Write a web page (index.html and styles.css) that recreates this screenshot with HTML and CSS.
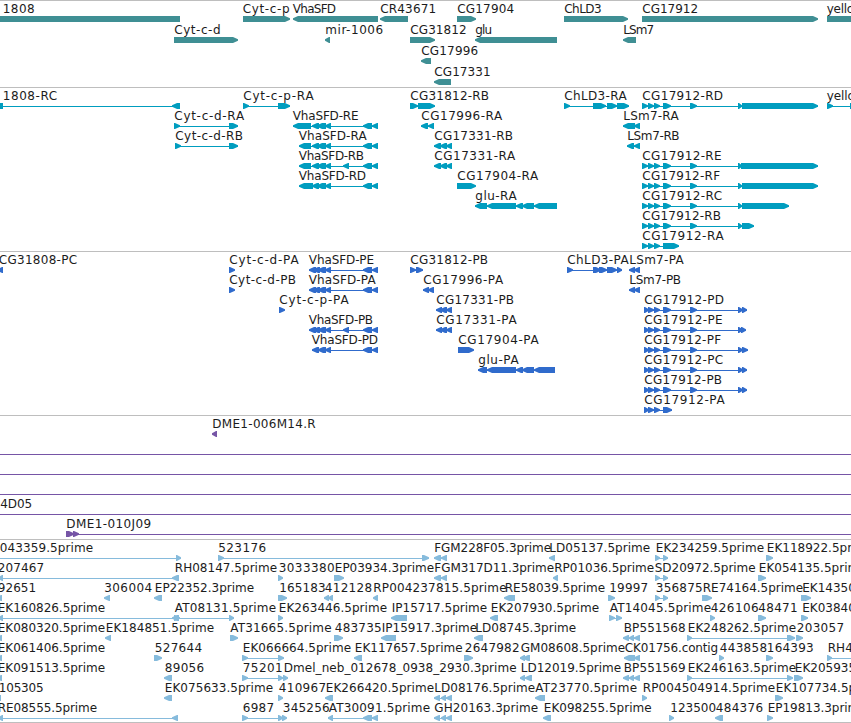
FILE: index.html
```html
<!DOCTYPE html>
<html>
<head>
  <meta charset="utf-8">
  <title>Genome Browser</title>
  <link rel="stylesheet" href="styles.css">
</head>
<body>

  <div class="browser">
    <section class="track genes" id="genes"></section>
    <section class="track transcripts" id="transcripts"></section>
    <section class="track proteins" id="proteins"></section>
    <section class="track clones" id="clones"></section>
    <section class="track ests" id="ests"></section>
  </div>

  <script src="script.js"></script>
</body>
</html>
```

FILE: styles.css
```css
body {
  margin: 0;
  background: #fff;
  overflow: hidden;
}

.browser {
  display: flex;
  flex-direction: column;
  width: 100%;
  height: 723px;
  overflow: hidden;
}

.track {
  flex: none;
  border-top: 1px solid #bebebe;
}

.track svg {
  display: block;
  width: 100%;
  height: 100%;
  overflow: hidden;
}

.track text {
  font-family: "DejaVu Sans", sans-serif;
  font-size: 12px;
  fill: #1c1c1c;
}

.genes {
  height: 86px;
  fill: #3f8f94;
}

.transcripts {
  height: 163px;
  fill: #009dbf;
}

.proteins {
  height: 163px;
  fill: #306bcc;
}

.clones {
  height: 123px;
  fill: #7655a6;
}

.ests {
  height: 182px;
  fill: #86bbdc;
  border-bottom: 1px solid #bebebe;
}
```

FILE: script.js
```javascript
// [row, label, label start, label end, strand, blocks]
const genes = [
  [0, '1808', 3, 34, '<', [[-10, 180]]],
  [0, 'Cyt-c-p', 243, 289, '>', [[243, 290]]],
  [0, 'VhaSFD', 293, 335.5, '<', [[293, 378]]],
  [0, 'CR43671', 380.5, 435.5, '<', [[380, 408]]],
  [0, 'CG17904', 457.5, 513.5, '>', [[457, 476]]],
  [0, 'ChLD3', 564.5, 601, '>', [[564, 628]]],
  [0, 'CG17912', 642.5, 697.5, '>', [[642, 818]]],
  [0, 'yellow', 827, 863, '>', [[827, 900]]],
  [1, 'Cyt-c-d', 174.5, 220, '>', [[174, 238]]],
  [1, 'mir-1006', 325.5, 382.5, '<', [[325, 330]]],
  [1, 'CG31812', 410.5, 466, '>', [[410, 435]]],
  [1, 'glu', 475.5, 491.5, '<', [[475, 557]]],
  [1, 'LSm7', 623.5, 653.5, '<', [[623, 636]]],
  [2, 'CG17996', 421.5, 477.5, '<', [[421, 431]]],
  [3, 'CG17331', 434.5, 490, '<', [[434, 451]]]
];

const sfd = [[312, 319], [317, 326], [325, 331], [363, 372], [372, 378]];
const sfdB = [[312, 319], [317, 326], [325, 331], [343, 349], [363, 372], [372, 378]];
const c17331 = [[434, 441], [440, 447], [446, 452]];
const first3 = [[642, 648], [648, 654], [654, 660]];
const c17912 = [...first3, [663, 671], [690, 697], [738, 742]];

const transcripts = [
  [0, '1808-RC', 3, 56.5, '<', [[-9, 3], [172, 180]]],
  [0, 'Cyt-c-p-RA', 243.5, 313, '>', [[243, 249], [278, 290]]],
  [0, 'CG31812-RB', 410.5, 488.5, '>', [[410, 418], [418, 435]]],
  [0, 'ChLD3-RA', 564.5, 626, '>', [[564, 570], [593, 606], [607, 617], [617, 629]]],
  [0, 'CG17912-RD', 642.5, 722.5, '>', [...c17912, [742, 818]]],
  [0, 'yellow-RA', 827, 884, '>', [[827, 833], [850, 870]]],
  [1, 'Cyt-c-d-RA', 174.5, 243.5, '>', [[174, 180], [229, 238]]],
  [1, 'VhaSFD-RE', 293, 358, '<', [[293, 311], ...sfd]],
  [1, 'CG17996-RA', 421.5, 501.5, '<', [[421, 428], [428, 434]]],
  [1, 'LSm7-RA', 623.5, 678, '<', [[623, 635], [634, 640]]],
  [2, 'Cyt-c-d-RB', 175.5, 242.5, '>', [[175, 181], [229, 238]]],
  [2, 'VhaSFD-RA', 299, 366, '<', [[299, 311], ...sfd]],
  [2, 'CG17331-RB', 434.5, 512.5, '<', c17331],
  [2, 'LSm7-RB', 627.5, 679, '<', [[627, 634], [634, 640]]],
  [3, 'VhaSFD-RB', 299, 363.5, '<', [[299, 311], ...sfdB]],
  [3, 'CG17331-RA', 434.5, 514.5, '<', c17331],
  [3, 'CG17912-RE', 642.5, 721, '>', [...c17912, [741, 818]]],
  [4, 'VhaSFD-RD', 299, 365.5, '<', [[299, 313], ...sfd]],
  [4, 'CG17904-RA', 457.5, 537.5, '>', [[457, 476]]],
  [4, 'CG17912-RF', 642.5, 719.5, '>', [...c17912, [742, 818]]],
  [5, 'glu-RA', 475.5, 516, '<', [[475, 487], [487, 516], [516, 523], [522, 534], [534, 557]]],
  [5, 'CG17912-RC', 642.5, 721.5, '>', [...c17912, [742, 789]]],
  [6, 'CG17912-RB', 642.5, 720.5, '>', [...c17912, [742, 754]]],
  [7, 'CG17912-RA', 642.5, 723, '>', [...first3, [663, 679]]]
];

const psfd = [[313, 320], [318, 326], [325, 331], [363, 372], [372, 378]];
const psfdB = [[313, 320], [318, 326], [325, 331], [343, 349], [363, 372], [372, 378]];
const p17331 = [[436, 442], [440, 447], [446, 452]];
const pfirst3 = [[644, 649], [648, 654], [654, 660]];
const p17912 = [...pfirst3, [663, 671], [690, 697], [738, 743]];

const proteins = [
  [0, 'CG31808-PC', -1, 76.5, '<', [[-3, 3]]],
  [0, 'Cyt-c-d-PA', 229.5, 298, '>', [[229, 235]]],
  [0, 'VhaSFD-PE', 309, 373.5, '<', [[309, 316], ...psfd]],
  [0, 'CG31812-PB', 410.5, 487.5, '>', [[410, 416], [416, 423]]],
  [0, 'ChLD3-PA', 567.5, 628, '>', [[567, 573], [593, 601], [599, 607], [607, 617], [617, 622]]],
  [0, 'LSm7-PA', 629.5, 683, '<', [[629, 635], [634, 640]]],
  [1, 'Cyt-c-d-PB', 229.5, 295.5, '>', [[229, 235]]],
  [1, 'VhaSFD-PA', 309, 375, '<', [[309, 316], ...psfd]],
  [1, 'CG17996-PA', 423.5, 502.5, '<', [[423, 429], [428, 434]]],
  [1, 'LSm7-PB', 629.5, 680.5, '<', [[629, 635], [634, 640]]],
  [2, 'Cyt-c-p-PA', 279.5, 348, '>', [[279, 285]]],
  [2, 'CG17331-PB', 436.5, 513.5, '<', p17331],
  [2, 'CG17912-PD', 644.5, 723.5, '>', [...p17912, [742, 747]]],
  [3, 'VhaSFD-PB', 309, 372.5, '<', [[309, 316], ...psfdB]],
  [3, 'CG17331-PA', 436.5, 516, '<', p17331],
  [3, 'CG17912-PE', 644.5, 722, '>', [...p17912, [741, 746]]],
  [4, 'VhaSFD-PD', 312, 377.5, '<', [[312, 319], [318, 326], [325, 331], [363, 372], [372, 378]]],
  [4, 'CG17904-PA', 458.5, 538, '>', [[458, 474]]],
  [4, 'CG17912-PF', 644.5, 720.5, '>', [...p17912, [742, 748]]],
  [5, 'glu-PA', 478.5, 518, '<', [[478, 487], [487, 516], [516, 523], [522, 534], [534, 555]]],
  [5, 'CG17912-PC', 644.5, 722.5, '>', [...p17912, [742, 747]]],
  [6, 'CG17912-PB', 644.5, 721.5, '>', [...p17912, [742, 747]]],
  [7, 'CG17912-PA', 644.5, 724, '>', [...pfirst3, [663, 672]]]
];

const clones = [
  [0, 'DME1-006M14.R', 212.5, 315, '<', [[212, 217]]],
  [1, '', 0, 0, '>', [[-10, -5], [860, 865]]],
  [2, '', 0, 0, '>', [[-10, -5], [860, 865]]],
  [3, '', 0, 0, '>', [[-10, -5], [860, 865]]],
  [4, '4D05', 0.5, 31.5, '>', [[-10, -5], [860, 865]]],
  [5, 'DME1-010J09', 66.5, 150.5, '>', [[66, 74], [73, 79], [860, 865]]]
];

const pair = [[655, 660], [663, 668]];

const ests = [
  [0, '043359.5prime', 0, 92.5, '>', [[-10, -5], [176, 181]]],
  [0, '523176', 218.5, 265.5, '>', [[218, 224], [422, 429]]],
  [0, 'FGM228F05.3prime', 434.5, 550.5, '<', [[434, 441], [441, 447]]],
  [0, 'LD05137.5prime', 549.5, 649.5, '<', [[549, 555]]],
  [0, 'EK234259.5prime', 656, 763.5, '>', pair],
  [0, 'EK118922.5prime', 767, 874, '>', [[766, 773]]],
  [1, '207467', -2, 43.5, '<', [[-2, 3], [172, 179]]],
  [1, 'RH08147.5prime', 175, 276.5, '<', []],
  [1, '3033380', 279, 334, '>', [[278, 283]]],
  [1, 'EP03934.3prime', 335, 433.5, '>', [[334, 344]]],
  [1, 'FGM317D11.3prime', 434.5, 553.5, '<', [[434, 441], [441, 447]]],
  [1, 'RP01036.5prime', 554.5, 653.5, '<', [[553, 558]]],
  [1, 'SD20972.5prime', 655, 755, '>', pair],
  [1, 'EK054135.5prime', 759, 866, '>', [[758, 766]]],
  [2, '92651', -2, 35.5, '<', [[-4, 2]]],
  [2, '306004', 104.5, 151.5, '<', [[104, 110]]],
  [2, 'EP22352.3prime', 155, 253.5, '<', [[154, 162]]],
  [2, '165183', 279.5, 325, '>', [[278, 287]]],
  [2, '412128', 325, 371.5, '<', [[324, 329], [328, 333]]],
  [2, 'RP004237815.5prime', 373.5, 506, '<', [[373, 378]]],
  [2, 'RE58039.5prime', 505, 604.5, '<', [[504, 515]]],
  [2, '19997', 609.5, 647.5, '>', [[608, 615]]],
  [2, '356875', 656, 702, '>', pair],
  [2, 'RE74164.5prime', 703, 802.5, '>', [[702, 712]]],
  [2, 'EK143507.5prime', 802.5, 909, '>', [[801, 811]]],
  [3, 'EK160826.5prime', -2, 104.5, '<', [[-2, 3], [172, 179]]],
  [3, 'AT08131.5prime', 175, 275.5, '>', [[174, 180], [229, 234]]],
  [3, 'EK263446.5prime', 279, 386.5, '>', [[278, 283]]],
  [3, 'IP15717.5prime', 392, 486.5, '<', [[391, 407]]],
  [3, 'EK207930.5prime', 491, 598.5, '<', [[490, 498]]],
  [3, 'AT14045.5prime', 610, 710.5, '>', [[609, 615], [616, 622]]],
  [3, '426106', 711, 758, '>', [[710, 715]]],
  [3, '48471', 758.5, 797, '>', [[758, 766]]],
  [3, 'EK038407.5prime', 802.5, 909, '>', [[801, 808]]],
  [4, 'EK080320.5prime', -2, 104.5, '<', [[-4, 2]]],
  [4, 'EK184851.5prime', 106, 213.5, '<', [[105, 111]]],
  [4, 'AT31665.5prime', 230.5, 331, '>', [[230, 238]]],
  [4, '483735', 335, 381, '>', [[334, 343]]],
  [4, 'IP15917.3prime', 382, 476.5, '<', [[381, 396]]],
  [4, 'LD08745.3prime', 475.5, 575.5, '<', [[474, 483]]],
  [4, 'BP551568', 624, 685, '<', [[623, 629], [629, 634], [634, 640]]],
  [4, 'EK248262.5prime', 688, 795.5, '>', [[687, 692], [787, 795]]],
  [4, '203057', 797, 843.5, '>', [[796, 803]]],
  [5, 'EK061406.5prime', -2, 104.5, '<', [[-4, 2]]],
  [5, '527644', 155, 201.5, '>', [[154, 162]]],
  [5, 'EK066664.5prime', 243, 350.5, '>', [[242, 248], [278, 284]]],
  [5, 'EK117657.5prime', 355, 462, '<', [[354, 362]]],
  [5, '2647982', 465, 519, '>', [[464, 473]]],
  [5, 'GM08608.5prime', 521, 624.5, '<', [[520, 525], [523, 530]]],
  [5, 'CK01756.contig', 625, 717.5, '<', [[624, 635], [634, 640]]],
  [5, '443858', 720, 766.5, '>', [[719, 724]]],
  [5, '164393', 767, 813, '>', [[766, 773]]],
  [5, 'RH43429.5prime', 828, 929, '>', [[827, 832], [870, 875]]],
  [6, 'EK091513.5prime', -2, 104.5, '<', [[-4, 2]]],
  [6, '89056', 165, 203.5, '<', [[164, 172]]],
  [6, '75201', 243, 282, '>', [[242, 248], [278, 283]]],
  [6, 'Dmel_neb_012678_0938_2930.3prime', 284, 516, '>', [[283, 288]]],
  [6, 'LD12019.5prime', 521, 620.5, '<', [[520, 525], [525, 532]]],
  [6, 'BP551569', 624, 685, '<', [[623, 629], [629, 634], [634, 640]]],
  [6, 'EK246163.5prime', 688, 795.5, '>', [[687, 692], [787, 793]]],
  [6, 'EK205935.5prime', 795, 902, '>', [[794, 803]]],
  [7, '105305', -1, 43, '<', [[-4, 1]]],
  [7, 'EK075633.5prime', 165, 272.5, '<', [[164, 172]]],
  [7, '410967', 279, 325.5, '>', [[278, 283]]],
  [7, 'EK266420.5prime', 326, 433.5, '<', [[325, 333]]],
  [7, 'LD08176.5prime', 434.5, 534.5, '<', [[434, 440], [441, 446], [446, 452]]],
  [7, 'AT23770.5prime', 535.5, 636.5, '<', [[535, 545]]],
  [7, 'RP004504914.5prime', 643, 774.5, '>', [[642, 647]]],
  [7, 'EK107734.5prime', 776, 883, '>', [[775, 783]]],
  [8, 'RE08555.5prime', -2, 96.5, '<', [[-2, 3], [172, 178]]],
  [8, '6987', 243, 273.5, '>', [[242, 248], [278, 283]]],
  [8, '345256', 283, 329, '>', [[282, 287]]],
  [8, 'AT30091.5prime', 329, 429.5, '<', [[328, 333], [363, 372], [372, 378]]],
  [8, 'GH20163.3prime', 434.5, 537.5, '<', [[434, 440], [441, 446], [446, 452]]],
  [8, 'EK098255.5prime', 544, 651, '<', [[543, 551]]],
  [8, '123500', 670.5, 715.5, '>', [[669, 674]]],
  [8, '484376', 716, 762.5, '<', [[715, 723]]],
  [8, 'EP19813.3prime', 768, 866, '>', [[767, 773]]]
];

const HEAD = 5;

// block with an arrow head at the end the strand points to
function block(a, b, y, strand) {
  const head = Math.min(HEAD, b - a - 1);
  let points;
  if (strand === '>') {
    points = `${a},${y} ${b - head},${y} ${b},${y + 2.3} ${b},${y + 3.7} ${b - head},${y + 6} ${a},${y + 6}`;
  } else {
    points = `${b},${y} ${a + head},${y} ${a},${y + 2.3} ${a},${y + 3.7} ${a + head},${y + 6} ${b},${y + 6}`;
  }
  return `<polygon points="${points}"/>`;
}

function drawTrack(id, features, rowHeight) {
  let shapes = '';
  let labels = '';

  features.forEach(([row, label, start, end, strand, blocks]) => {
    const top = row * rowHeight;
    if (blocks.length > 1) {
      const from = blocks[0][0];
      const to = blocks[blocks.length - 1][1];
      shapes += `<rect x="${from}" y="${top + 18}" width="${to - from}" height="1"/>`;
    }
    blocks.forEach(([a, b]) => {
      shapes += block(a, b, top + 15, strand);
    });
    if (label) {
      labels += `<text x="${start - 0.2}" y="${top + 12}" textLength="${end - start + 0.8}">${label}</text>`;
    }
  });

  document.getElementById(id).innerHTML = `<svg>${shapes}${labels}</svg>`;
}

drawTrack('genes', genes, 21);
drawTrack('transcripts', transcripts, 20);
drawTrack('proteins', proteins, 20);
drawTrack('clones', clones, 20);
drawTrack('ests', ests, 20);
```
